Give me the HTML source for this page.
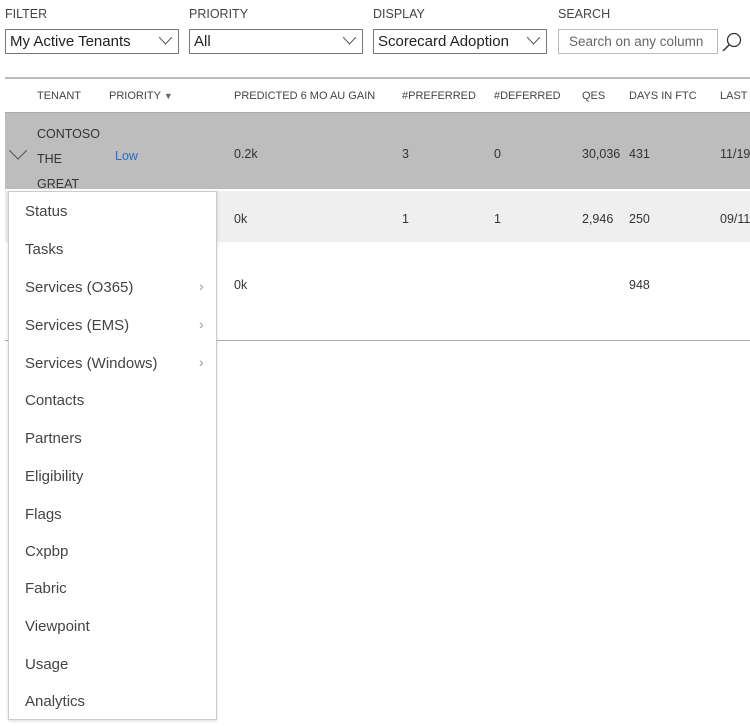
<!DOCTYPE html>
<html><head><style>
body{margin:0;width:750px;height:726px;background:#fff;font-family:"Segoe UI","Liberation Sans",sans-serif;color:#333;position:relative;overflow:hidden}
.a{position:absolute;white-space:nowrap}
.lbl{font-size:12.5px;color:#444;top:7px}
.sel{top:29px;height:25px;border:1px solid #777;box-sizing:border-box;font-size:15px;color:#222;padding-left:4px;line-height:24px}
.sel svg{position:absolute;right:6px;top:7px}
.h{font-size:11px;color:#444;top:90px}
.c{font-size:12.5px;color:#333}
.m{font-size:15px;color:#444;left:25px}
.ar{position:absolute;font-size:14px;color:#999}
</style></head><body>
<div class="a lbl" style="left:5px">FILTER</div>
<div class="a lbl" style="left:189px">PRIORITY</div>
<div class="a lbl" style="left:373px">DISPLAY</div>
<div class="a lbl" style="left:558px">SEARCH</div>
<div class="a sel" style="left:5px;width:174px">My Active Tenants<svg width="13" height="8"><path d="M0 0L6.5 7L13 0" fill="none" stroke="#555"/></svg></div>
<div class="a sel" style="left:189px;width:174px">All<svg width="13" height="8"><path d="M0 0L6.5 7L13 0" fill="none" stroke="#555"/></svg></div>
<div class="a sel" style="left:373px;width:174px">Scorecard Adoption<svg width="13" height="8"><path d="M0 0L6.5 7L13 0" fill="none" stroke="#555"/></svg></div>
<div class="a sel" style="left:558px;width:160px;border-color:#bbb;color:#666;font-size:13.5px;padding-left:10px">Search on any column</div>
<svg class="a" style="left:721px;top:31px" width="22" height="22"><circle cx="13" cy="9" r="6.5" fill="none" stroke="#333" stroke-width="1.3"/><path d="M8.5 13.5L2 20" stroke="#333" stroke-width="1.5"/></svg>
<div class="a" style="left:5px;top:77px;width:745px;height:2px;background:#bbb"></div>
<div class="a h" style="left:37px">TENANT</div>
<div class="a h" style="left:109px">PRIORITY <span style="font-size:9px;color:#666">▼</span></div>
<div class="a h" style="left:234px">PREDICTED 6 MO AU GAIN</div>
<div class="a h" style="left:402px">#PREFERRED</div>
<div class="a h" style="left:494px">#DEFERRED</div>
<div class="a h" style="left:582px">QES</div>
<div class="a h" style="left:629px">DAYS IN FTC</div>
<div class="a h" style="left:720px">LAST</div>
<div class="a" style="left:5px;top:112px;width:745px;height:1px;background:#aaa"></div>
<div class="a" style="left:5px;top:113px;width:745px;height:76px;background:#bdbdbd"></div>
<svg class="a" style="left:9px;top:150px" width="18" height="10"><path d="M0 0L9 9L18 0" fill="none" stroke="#555"/></svg>
<div class="a c" style="left:37px;top:122px;line-height:25px">CONTOSO<br>THE<br>GREAT</div>
<div class="a c" style="left:115px;top:149px;color:#2b6cc4">Low</div>
<div class="a c" style="left:234px;top:147px">0.2k</div>
<div class="a c" style="left:402px;top:147px">3</div>
<div class="a c" style="left:494px;top:147px">0</div>
<div class="a c" style="left:582px;top:147px">30,036</div>
<div class="a c" style="left:629px;top:147px">431</div>
<div class="a c" style="left:720px;top:147px">11/19/</div>
<div class="a" style="left:5px;top:191px;width:745px;height:51px;background:#efefef"></div>
<div class="a c" style="left:234px;top:212px">0k</div>
<div class="a c" style="left:402px;top:212px">1</div>
<div class="a c" style="left:494px;top:212px">1</div>
<div class="a c" style="left:582px;top:212px">2,946</div>
<div class="a c" style="left:629px;top:212px">250</div>
<div class="a c" style="left:720px;top:212px">09/11/</div>
<div class="a c" style="left:234px;top:278px">0k</div>
<div class="a c" style="left:629px;top:278px">948</div>
<div class="a" style="left:5px;top:340px;width:745px;height:1px;background:#aaa"></div>
<div class="a" style="left:8px;top:191px;width:209px;height:529px;background:#fff;border:1px solid #ccc;box-sizing:border-box;box-shadow:0 1px 3px rgba(0,0,0,.15)">
<div class="a m" style="left:16px;top:11px">Status</div>
<div class="a m" style="left:16px;top:49px">Tasks</div>
<div class="a m" style="left:16px;top:87px">Services (O365)</div><div class="ar" style="left:190px;top:86px">›</div>
<div class="a m" style="left:16px;top:125px">Services (EMS)</div><div class="ar" style="left:190px;top:124px">›</div>
<div class="a m" style="left:16px;top:163px">Services (Windows)</div><div class="ar" style="left:190px;top:162px">›</div>
<div class="a m" style="left:16px;top:200px">Contacts</div>
<div class="a m" style="left:16px;top:238px">Partners</div>
<div class="a m" style="left:16px;top:276px">Eligibility</div>
<div class="a m" style="left:16px;top:314px">Flags</div>
<div class="a m" style="left:16px;top:351px">Cxpbp</div>
<div class="a m" style="left:16px;top:388px">Fabric</div>
<div class="a m" style="left:16px;top:426px">Viewpoint</div>
<div class="a m" style="left:16px;top:464px">Usage</div>
<div class="a m" style="left:16px;top:501px">Analytics</div>
</div>
</body></html>
